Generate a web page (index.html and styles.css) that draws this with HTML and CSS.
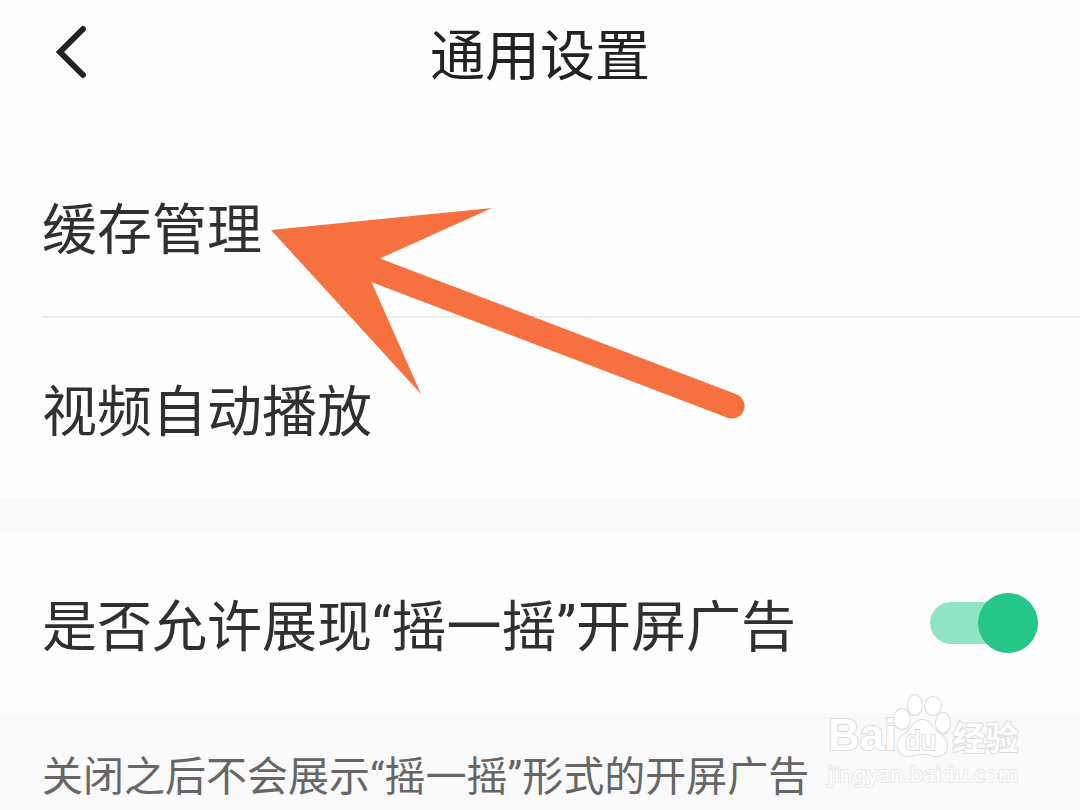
FILE: index.html
```html
<!DOCTYPE html>
<html lang="zh-CN">

<head>
    <meta charset="UTF-8">
    <meta name="viewport" content="width=device-width, initial-scale=1.0">
    <title>通用设置</title>
    <link rel="stylesheet" href="styles.css">
</head>

<body>
    <header class="header">
        <button class="back" type="button" aria-label="返回">
            <svg viewBox="0 0 32 54" width="32" height="54">
                <path d="M28 4 L5 27 L28 50" />
            </svg>
        </button>
        <h1>通用设置</h1>
    </header>

    <main>
        <section class="group">
            <a class="row" href="#cache"><span class="row-text">缓存管理</span></a>
            <a class="row" href="#autoplay"><span class="row-text">视频自动播放</span></a>
        </section>
        <section class="group">
            <div class="row">
                <label class="row-text" for="shake">是否允许展现“摇一摇”开屏广告</label>
                <input class="switch" id="shake" type="checkbox" checked>
            </div>
        </section>
        <p class="note">关闭之后不会展示“摇一摇”形式的开屏广告</p>
    </main>

    <svg class="arrow" viewBox="0 0 480 220">
        <path class="head" d="M4 31 L225 9 L114 59 L104 82 L154 195 Z" />
        <path class="shaft" d="M100 68 L465 207" />
    </svg>

    <div class="watermark">
        <div class="brand">
            <span>Bai</span>
            <svg viewBox="0 0 60 64" width="60" height="64">
                <ellipse cx="10" cy="26" rx="8" ry="10" />
                <ellipse cx="23" cy="12" rx="7" ry="10" />
                <ellipse cx="41" cy="13" rx="8" ry="9" />
                <ellipse cx="51" cy="30" rx="7" ry="10" />
                <path d="M30 27 C22 27 20 36 13 41 C7 45 5 49 6 54 C7 61 13 64 20 63 C27 60 35 60 42 63 C49 64 55 60 55 53 C55 47 51 43 47 40 C40 35 39 27 30 27 Z" />
                <text x="13" y="57">du</text>
            </svg>
            <span class="cn">经验</span>
        </div>
        <div class="site">jingyan.baidu.com</div>
    </div>
</body>

</html>
```

FILE: styles.css
```css
body {
    margin: 0;
    background-color: #fafafa;
    color: #303030;
    font-family: Roboto, "Noto Sans CJK SC", sans-serif;
    overflow: hidden;
}

.header {
    display: grid;
    grid-template-columns: 100px 1fr 100px;
    align-items: center;
    height: 104px;
    background-color: #fefefe;
}

.header h1 {
    margin: 0;
    padding-top: 8px;
    color: #222;
    font-size: 55px;
    font-weight: 400;
    line-height: 80px;
    text-align: center;
}

.back {
    justify-self: start;
    margin-left: 55px;
    padding: 0;
    border: none;
    background: none;
    line-height: 0;
    cursor: pointer;
}

.back path {
    fill: none;
    stroke: #222;
    stroke-width: 6;
    stroke-linecap: round;
}

.group {
    padding-left: 42px;
    background-color: #fefefe;
    margin-bottom: 35px;
}

.group:first-child {
    padding-top: 32px;
}

.row {
    display: flex;
    align-items: center;
    justify-content: space-between;
    height: 180px;
    padding-right: 42px;
    color: inherit;
    font-size: 55px;
    line-height: 80px;
    text-decoration: none;
}

.row + .row {
    border-top: 2px solid #ececec;
}

.row-text {
    padding-top: 8px;
}

.group:last-of-type {
    margin-bottom: 0;
}

.switch {
    appearance: none;
    position: relative;
    width: 108px;
    height: 60px;
    margin: 0;
    cursor: pointer;
}

.switch::before {
    content: "";
    position: absolute;
    inset: 9px 8px 9px 0;
    border-radius: 21px;
    background-color: #92e5c4;
}

.switch::after {
    content: "";
    position: absolute;
    top: 0;
    right: 0;
    width: 60px;
    height: 60px;
    border-radius: 50%;
    background-color: #25c789;
}

.note {
    margin: 0;
    padding: 34px 42px 0;
    color: #666;
    font-size: 41px;
    line-height: 60px;
}

/* pointer drawn over the list */
.arrow {
    position: absolute;
    top: 199px;
    left: 267px;
    width: 480px;
    height: 220px;
    pointer-events: none;
}

.arrow .head {
    fill: #f77040;
}

.arrow .shaft {
    fill: none;
    stroke: #f77040;
    stroke-width: 25;
    stroke-linecap: round;
}

.watermark {
    position: absolute;
    top: 693px;
    left: 828px;
    color: #fff;
    font-family: "Liberation Sans", "Noto Sans CJK SC", sans-serif;
    -webkit-text-stroke: 2px #dcdcdc;
    paint-order: stroke fill;
}

.brand {
    display: flex;
    align-items: flex-end;
    font-size: 44px;
    font-weight: 700;
    line-height: 44px;
}

.brand svg {
    margin-left: -4px;
    fill: #fff;
    stroke: #dcdcdc;
    stroke-width: 2;
}

.brand text {
    font-size: 28px;
    font-weight: 400;
}

.brand .cn {
    font-size: 33px;
    line-height: 36px;
}

.site {
    font-family: "Noto Sans", sans-serif;
    font-size: 22px;
    line-height: 32px;
    -webkit-text-stroke-color: #e8e8e8;
}
```
